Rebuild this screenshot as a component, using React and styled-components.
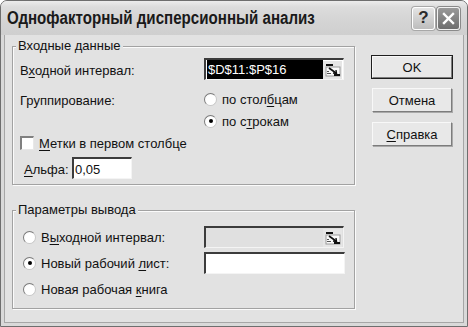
import React from 'react';
import styled, { createGlobalStyle } from 'styled-components';

const GlobalStyle = createGlobalStyle`
  html, body {
    margin: 0;
    padding: 0;
    background: #ffffff;
  }
  body {
    font-family: "Liberation Sans", Arial, sans-serif;
    font-size: 13px;
    color: #111;
  }
`;

const Window = styled.div`
  width: 468px;
  height: 327px;
  box-sizing: border-box;
  border: 1px solid #6e6e6e;
  border-radius: 7px 7px 0 0;
  background: #d9d9d9;
  display: flex;
  flex-direction: column;
  overflow: hidden;
`;

const TitleBar = styled.div`
  height: 34px;
  flex: none;
  display: flex;
  align-items: center;
  justify-content: space-between;
  padding: 0 7px 0 6px;
  background: linear-gradient(#ececec 0%, #dcdcdc 18%, #d4d4d4 60%, #cfcfcf 100%);
`;

/* XP caption font is condensed; squeeze the sans to the same width */
const Title = styled.div`
  font-family: "Liberation Sans", Arial, sans-serif;
  font-weight: bold;
  font-size: 18px;
  color: #1a1a1a;
  padding-top: 1px;
  white-space: nowrap;
  transform: scaleX(0.84);
  transform-origin: left center;
`;

const TitleButtons = styled.div`
  display: flex;
  gap: 2px;
`;

const CaptionButton = styled.div`
  width: 23px;
  height: 23px;
  box-sizing: border-box;
  border-radius: 3px;
  border: 1px solid ${p => (p.$dark ? '#f2f2f2' : '#ffffff')};
  box-shadow: 0 0 0 1px ${p => (p.$dark ? '#8a8a8a' : '#a8a8a8')};
  background: ${p => (p.$dark
    ? 'linear-gradient(#9a9a9a, #6e6e6e)'
    : 'linear-gradient(#e4e4e4, #bdbdbd)')};
  display: flex;
  align-items: center;
  justify-content: center;
  color: ${p => (p.$dark ? '#fff' : '#2a2a2a')};
  font-weight: bold;
  font-size: 17px;
`;

const Body = styled.div`
  flex: 1;
  display: flex;
  gap: 17px;
  padding: 11px 0 0 7px;
  margin: 0 3px 3px 3px;
  background: #e2e2e2;
  border-left: 1px solid #a6a6a6;
  border-right: 1px solid #a6a6a6;
  border-bottom: 1px solid #a6a6a6;
`;

const LeftColumn = styled.div`
  width: 343px;
  display: flex;
  flex-direction: column;
  gap: 25px;
`;

const Group = styled.div`
  position: relative;
  box-sizing: border-box;
  height: ${p => p.$height}px;
  border: 1px solid #a2a2a2;
  box-shadow: 1px 1px 0 #fbfbfb, inset 1px 1px 0 #fbfbfb;
  padding: ${p => p.$pad};
  display: flex;
  flex-direction: column;
`;

const Legend = styled.span`
  position: absolute;
  top: -9px;
  left: 3px;
  padding: 0 2px;
  background: #e2e2e2;
  line-height: 16px;
`;

const Row = styled.div`
  height: ${p => p.$h || 22}px;
  display: flex;
  align-items: center;
  margin-top: ${p => p.$mt || 0}px;
`;

const Label = styled.span`
  width: ${p => p.$w || 184}px;
  flex: none;
  padding-top: 2px;
  padding-left: ${p => p.$indent || 0}px;
  box-sizing: border-box;
`;

const Key = styled.u`
  text-decoration-thickness: 1px;
  text-underline-offset: 2px;
`;

const Field = styled.div`
  box-sizing: border-box;
  width: ${p => p.$w}px;
  height: ${p => p.$h || 22}px;
  border-top: 2px solid #3c3c3c;
  border-left: 2px solid #3c3c3c;
  border-right: 1px solid #f4f4f4;
  border-bottom: 1px solid #f4f4f4;
  background: ${p => (p.$disabled ? '#e0e0e0' : '#ffffff')};
  display: flex;
  align-items: center;
  padding-left: 1px;
`;

const Selected = styled.span`
  flex: 1;
  align-self: stretch;
  background: #000;
  color: #fff;
  display: flex;
  align-items: center;
  padding-left: 1px;
  font-size: 13px;
`;

const FieldText = styled.span`
  flex: 1;
  padding-top: 1px;
`;

const RefButton = styled.div`
  width: 19px;
  height: 18px;
  flex: none;
  margin-right: 1px;
  background: #e6e6e6;
  display: flex;
  align-items: center;
  justify-content: center;
`;

const Radio = styled.span`
  width: 13px;
  height: 13px;
  box-sizing: border-box;
  border-radius: 50%;
  flex: none;
  margin-right: 5px;
  background: radial-gradient(circle at 60% 60%, #ffffff 55%, #ececec 100%);
  border: 1px solid #c8c8c8;
  border-top-color: #7a7a7a;
  border-left-color: #7a7a7a;
  display: flex;
  align-items: center;
  justify-content: center;
  &::after {
    content: '';
    width: 4px;
    height: 4px;
    border-radius: 50%;
    background: ${p => (p.$checked ? '#000' : 'transparent')};
  }
`;

const Option = styled.label`
  display: flex;
  align-items: center;
  width: ${p => (p.$w ? `${p.$w}px` : 'auto')};
  flex: none;
`;

const CheckBox = styled.span`
  width: 14px;
  height: 14px;
  box-sizing: border-box;
  flex: none;
  margin-right: 5px;
  background: #fff;
  border-top: 2px solid #808080;
  border-left: 2px solid #808080;
  border-right: 1px solid #e8e8e8;
  border-bottom: 1px solid #e8e8e8;
`;

const ButtonColumn = styled.div`
  width: 80px;
  display: flex;
  flex-direction: column;
  gap: 10px;
  padding-top: 10px;
`;

const Button = styled.div`
  box-sizing: border-box;
  height: ${p => (p.$default ? 22 : 24)}px;
  background: #e8e8e8;
  border: 1px solid #f8f8f8;
  border-right-color: #7c7c7c;
  border-bottom-color: #7c7c7c;
  box-shadow: ${p => (p.$default ? '0 0 0 1px #1e1e1e' : '1px 1px 0 #a9a9a9')};
  display: flex;
  align-items: center;
  justify-content: center;
  padding-top: 1px;
`;

const RefIcon = () => (
  <svg width="16" height="15" viewBox="0 0 16 15">
    <rect x="1" y="2" width="7" height="2" fill="#111" />
    <rect x="1" y="5" width="14" height="9" fill="#fafafa" stroke="#9a9a9a" strokeWidth="1" />
    <path d="M4 6 L11 11" stroke="#111" strokeWidth="1.6" />
    <path d="M8 11 L11.5 11.5 L11 8" fill="none" stroke="#111" strokeWidth="1.4" />
    <rect x="9" y="12" width="6" height="2" fill="#111" />
    <rect x="2" y="9" width="2" height="1" fill="#555" />
    <rect x="2" y="11" width="4" height="1" fill="#555" />
  </svg>
);

const CloseIcon = () => (
  <svg width="13" height="13" viewBox="0 0 13 13">
    <path d="M2 2 L11 11 M11 2 L2 11" stroke="#fff" strokeWidth="2.4" strokeLinecap="square" />
  </svg>
);

export default function App() {
  return (
    <>
      <GlobalStyle />
      <Window>
        <TitleBar>
          <Title>Однофакторный дисперсионный анализ</Title>
          <TitleButtons>
            <CaptionButton>?</CaptionButton>
            <CaptionButton $dark>
              <CloseIcon />
            </CaptionButton>
          </TitleButtons>
        </TitleBar>
        <Body>
          <LeftColumn>
            <Group $height={139} $pad="11px 0 0 7px">
              <Legend>Входные данные</Legend>
              <Row>
                <Label>В<Key>х</Key>одной интервал:</Label>
                <Field $w={140}>
                  <Selected>$D$11:$P$16</Selected>
                  <RefButton>
                    <RefIcon />
                  </RefButton>
                </Field>
              </Row>
              <Row $mt={8}>
                <Label>Группирование:</Label>
                <Option>
                  <Radio />
                  <span>по стол<Key>б</Key>цам</span>
                </Option>
              </Row>
              <Row>
                <Label />
                <Option>
                  <Radio $checked />
                  <span>по с<Key>т</Key>рокам</span>
                </Option>
              </Row>
              <Row>
                <Option>
                  <CheckBox />
                  <span><Key>М</Key>етки в первом столбце</span>
                </Option>
              </Row>
              <Row $mt={3}>
                <Label $w={52} $indent={4}>
                  <Key>А</Key>льфа:
                </Label>
                <Field $w={60} $h={22}>
                  <FieldText>0,05</FieldText>
                </Field>
              </Row>
            </Group>
            <Group $height={99} $pad="13px 0 0 10px">
              <Legend>Параметры вывода</Legend>
              <Row $h={26}>
                <Option $w={181}>
                  <Radio />
                  <span>В<Key>ы</Key>ходной интервал:</span>
                </Option>
                <Field $w={140} $disabled>
                  <FieldText />
                  <RefButton>
                    <RefIcon />
                  </RefButton>
                </Field>
              </Row>
              <Row $h={26}>
                <Option $w={181}>
                  <Radio $checked />
                  <span>Новый рабочий <Key>л</Key>ист:</span>
                </Option>
                <Field $w={141} />
              </Row>
              <Row $h={26}>
                <Option>
                  <Radio />
                  <span>Новая рабочая <Key>к</Key>нига</span>
                </Option>
              </Row>
            </Group>
          </LeftColumn>
          <ButtonColumn>
            <Button $default>OK</Button>
            <Button>Отмена</Button>
            <Button><span><Key>С</Key>правка</span></Button>
          </ButtonColumn>
        </Body>
      </Window>
    </>
  );
}
